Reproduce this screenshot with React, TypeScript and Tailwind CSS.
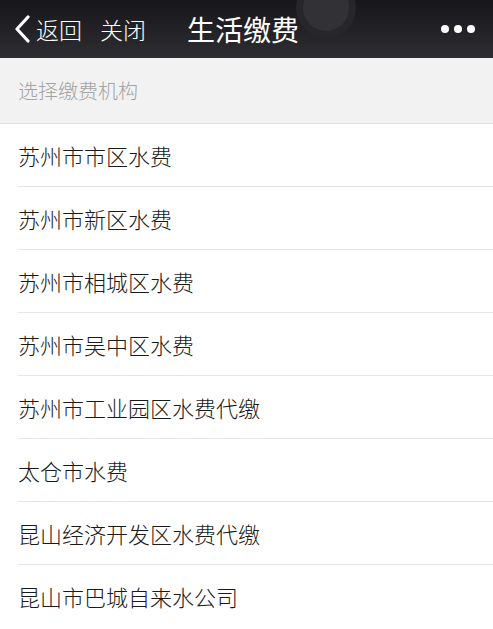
import * as React from "react";

const orgs = [
  "苏州市市区水费",
  "苏州市新区水费",
  "苏州市相城区水费",
  "苏州市吴中区水费",
  "苏州市工业园区水费代缴",
  "太仓市水费",
  "昆山经济开发区水费代缴",
  "昆山市巴城自来水公司",
];

const font = { fontFamily: '"Noto Sans CJK SC", "Noto Sans", sans-serif' };

export default function App() {
  return (
    <div className="relative min-h-[629px] w-full overflow-hidden bg-white" style={font}>
      {/* Nav bar */}
      <div className="relative flex h-[58px] items-center bg-gradient-to-b from-[#17171b] to-[#2e2e32] text-white">
        <div className="flex items-center pl-[13px]">
          <svg width="20" height="28" viewBox="0 0 20 28" className="mr-[3px]">
            <path d="M15 2 L4 14 L15 26" fill="none" stroke="white" strokeWidth="3.2" strokeLinecap="round" strokeLinejoin="round" />
          </svg>
          <span className="text-[23px] font-light leading-none">返回</span>
          <span className="ml-[18px] text-[23px] font-light leading-none">关闭</span>
        </div>
        <span className="ml-[41px] text-[28px] leading-none">生活缴费</span>
        <div className="ml-auto mr-[18px] flex items-center gap-[5px]">
          <span className="h-[8px] w-[8px] rounded-full bg-white" />
          <span className="h-[8px] w-[8px] rounded-full bg-white" />
          <span className="h-[8px] w-[8px] rounded-full bg-white" />
        </div>
        {/* floating assistive button */}
        <div className="absolute left-[296px] top-[-22px] flex h-[60px] w-[60px] items-center justify-center rounded-full bg-[#27272b]">
          <div className="h-[46px] w-[46px] rounded-full bg-[#323236]" />
        </div>
      </div>

      {/* Section header */}
      <div className="flex h-[66px] items-center border-b border-[#e3e3e3] bg-[#f2f2f2] pl-[18px]">
        <span className="text-[20px] font-light text-[#a3a3a3]">选择缴费机构</span>
      </div>

      {/* List */}
      <ul>
        {orgs.map((name, i) => (
          <li key={name} className="pl-[18px]">
            <div
              className={`flex h-[63px] items-center ${i < orgs.length - 1 ? "border-b border-[#e6e6e6]" : ""}`}
            >
              <span className="text-[22px] font-light text-[#1a1a1a]">{name}</span>
            </div>
          </li>
        ))}
      </ul>
    </div>
  );
}
